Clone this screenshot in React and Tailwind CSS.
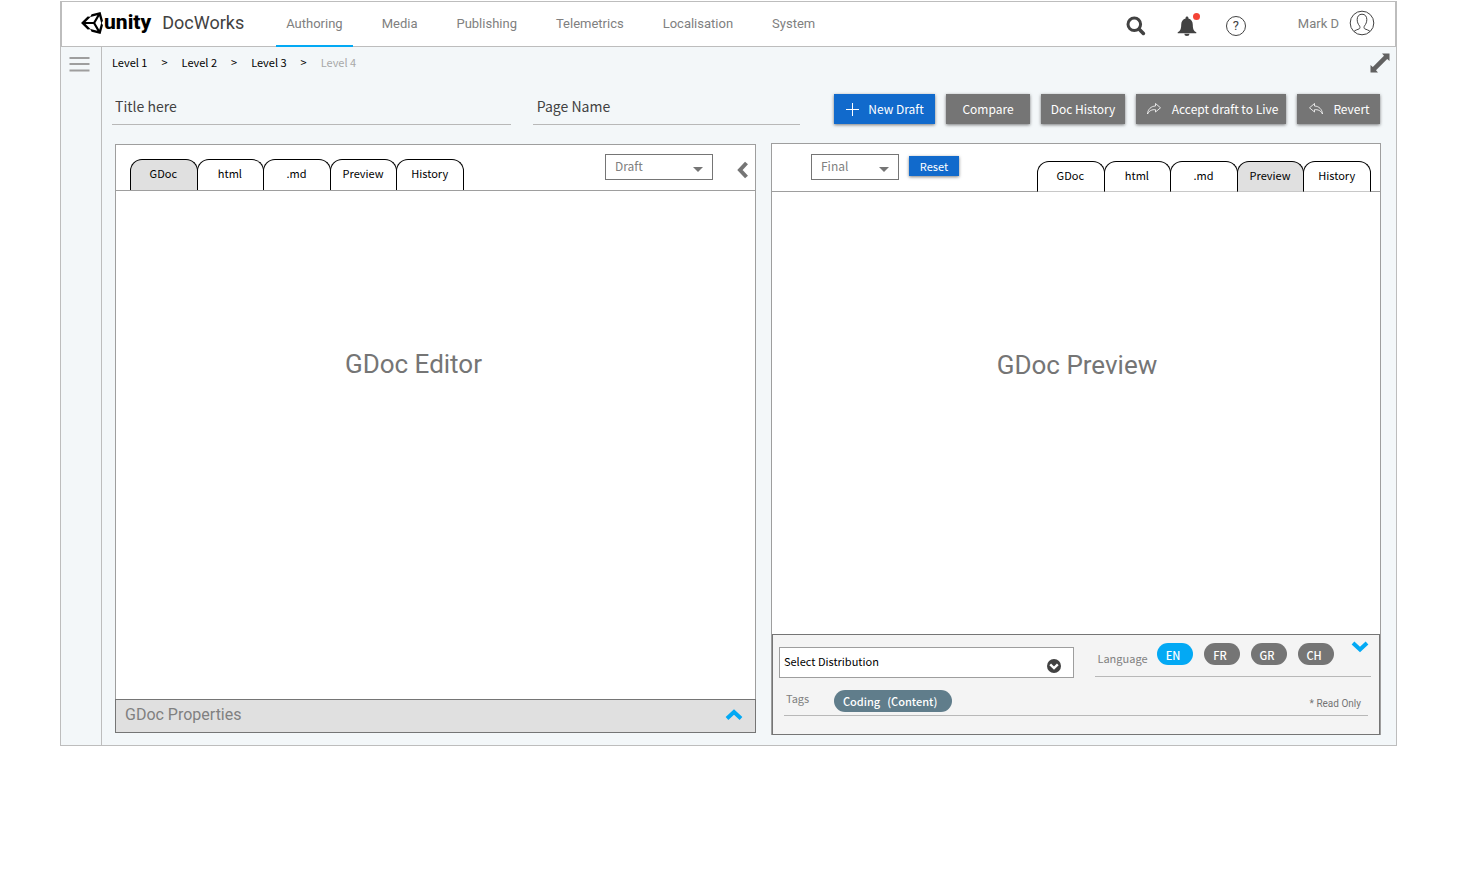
import React from "react";

const NAV = ["Authoring", "Media", "Publishing", "Telemetrics", "Localisation", "System"];
const TABS = ["GDoc", "html", ".md", "Preview", "History"];
const LANGUAGES = ["EN", "FR", "GR", "CH"];

function UnityLogo() {
  return (
    <svg width="22" height="22" viewBox="15 14 484 484" fill="currentColor">
      <path d="M498.11 206.4L445.31 14.72 248.2 66.08 219 116.14l-59.2-.43L15.54 256l144.28 140.32 59.17-.43 29.24 50 197.08 51.36 52.8-191.62-30-49.63zM223.77 124.2L374.55 86.51 288 232.33H114.87zm0 263.63L114.87 279.71H288l86.55 145.81zm193 14L330.17 256l86.58-145.84L458.56 256z" />
    </svg>
  );
}

function SearchIcon() {
  return (
    <svg width="20" height="20" viewBox="0 0 20 20" fill="none" stroke="#424242" strokeLinecap="round">
      <circle cx="8.3" cy="8.3" r="6.3" strokeWidth="3" />
      <path d="M13.2 13.2 17.4 17.4" strokeWidth="3.6" />
    </svg>
  );
}

function BellIcon() {
  return (
    <svg width="20" height="20" viewBox="0 0 20 20" fill="#424242">
      <path d="M10 0.4c.8 0 1.4.6 1.4 1.4v.7c2.8.7 4.4 3.2 4.4 6.2 0 4.300 1 6.300 3.500 7.600v1H.7v-1c2.500-1.300 3.500-3.300 3.500-7.600 0-3 1.600-5.500 4.400-6.200v-.7C8.600 1 9.200.4 10 .4Z" />
      <path d="M7.300 17.800h5.200a2.600 2.200 0 0 1-5.200 0Z" />
    </svg>
  );
}

function UserIcon() {
  return (
    <svg width="26" height="26" viewBox="0 0 26 26" fill="none" stroke="#424242" strokeWidth="1">
      <circle cx="13" cy="13" r="11.800" />
      <path d="M5 21.500c1-1.300 3.800-2 5.300-2.700.9-.5.8-2 .2-2.900-1.500-1.800-2.300-4-2.300-6.400 0-3.200 1.800-5.300 4.800-5.300s4.800 2.100 4.800 5.300c0 2.400-.8 4.600-2.300 6.400-.6.900-.7 2.400.2 2.900 1.500.7 4.300 1.400 5.300 2.700" />
    </svg>
  );
}

function ExpandIcon() {
  return (
    <svg width="20" height="20" viewBox="0 0 20 20" fill="#616161">
      <path d="M12 0.500h7.500V8l-2.300-2L6 17.200 8 19.500H.5V12l2.300 2L14 2.800Z" />
    </svg>
  );
}

function ShareIcon({ flip }) {
  return (
    <svg
      width="16"
      height="14"
      viewBox="0 0 16 14"
      fill="none"
      stroke="currentColor"
      strokeWidth="0.8"
      strokeLinejoin="round"
      className={flip ? "-scale-x-100" : ""}
    >
      <path d="M9.500 1.500 14.500 5.800 9.500 10V7.700C6 7.400 3.300 8.500 1.500 12 1.800 7.300 5 4.200 9.500 4Z" />
    </svg>
  );
}

function Chevron({ className, d, width, height }) {
  return (
    <svg
      width={width}
      height={height}
      viewBox={`0 0 ${width} ${height}`}
      fill="none"
      stroke="currentColor"
      strokeWidth="4"
      className={className}
    >
      <path d={d} />
    </svg>
  );
}

function Tabs({ active, className, tabClass }) {
  return (
    <div role="tablist" className={`flex w-[334px] pl-px ${className}`}>
      {TABS.map((t) => (
        <button
          key={t}
          role="tab"
          aria-selected={t === active}
          className={`-ml-px flex-1 rounded-t-xl border-x border-t border-black pb-1 pr-px text-[11px] leading-4 text-black ${tabClass} ${
            t === active ? "bg-[#e0e0e0]" : "bg-white"
          }`}
        >
          {t}
        </button>
      ))}
    </div>
  );
}

function StateSelect({ label, value, className }) {
  return (
    <div className={`grid items-center ${className}`}>
      <select
        aria-label={label}
        className="col-start-1 row-start-1 h-[26px] w-full appearance-none border border-[#757575] bg-white pb-[2px] pl-[9px] text-[12px] leading-4 text-[#808080]"
      >
        <option>{value}</option>
      </select>
      <svg width="10" height="5" viewBox="0 0 10 5" fill="#757575" className="pointer-events-none col-start-1 row-start-1 mr-[10px] mt-1 justify-self-end">
        <path d="M0 0h10L5 5Z" />
      </svg>
    </div>
  );
}

function ActionButton({ className, children }) {
  return (
    <button className={`flex h-[30px] items-center justify-center text-[12px] leading-4 text-white shadow-[0_1px_3px_rgba(0,0,0,0.5)] ${className}`}>
      {children}
    </button>
  );
}

function Field({ id, label, className }) {
  return (
    <input
      id={id}
      aria-label={label}
      defaultValue={label}
      className={`h-[31px] min-w-0 border-b border-[#b8b8b8] bg-transparent pb-[6px] text-[14px] leading-5 text-[#424242] outline-none ${className}`}
    />
  );
}

function Header() {
  return (
    <header className="flex h-[46px] items-center border border-[#bdbdbd] bg-white font-[Roboto,sans-serif]">
      <a href="#" className="ml-[19px] flex items-center gap-px pb-[2px] text-black">
        <UnityLogo />
        <span className="pb-[3px] text-[21px] font-extrabold leading-6">unity</span>
      </a>
      <span className="ml-[11px] pb-[2px] text-[18px] leading-6 text-[#424242]">DocWorks</span>
      <nav className="ml-[32px] flex gap-[19px] self-stretch">
        {NAV.map((n, i) => (
          <a
            key={n}
            href="#"
            className={`-mb-px px-[10px] pt-[12px] text-[13px] leading-5 text-[#808080] ${
              i === 0 ? "border-b-2 border-[#03a9f4]" : ""
            }`}
          >
            {n}
          </a>
        ))}
      </nav>
      <div className="ml-auto mr-5 flex items-center">
        <button aria-label="Search" className="mt-1">
          <SearchIcon />
        </button>
        <button aria-label="Notifications" className="relative ml-[31px] mt-1">
          <BellIcon />
          <span className="absolute -right-[3px] -top-[3px] size-[7px] rounded-full bg-[#f44336]" />
        </button>
        <button
          aria-label="Help"
          className="ml-[29px] mt-1 size-5 rounded-full border border-[#424242] text-center text-[13px] leading-[18px] text-[#424242]"
        >
          ?
        </button>
        <span className="ml-[52px] mr-[10px] text-[13px] leading-5 text-[#808080]">Mark D</span>
        <button aria-label="Account" className="pb-[2px]">
          <UserIcon />
        </button>
      </div>
    </header>
  );
}

function EditorPanel() {
  return (
    <section className="mt-px mb-[2px] flex min-w-0 flex-[641] flex-col border border-[#9e9e9e] bg-white">
      <div className="flex h-[46px] items-end border-b border-[#9e9e9e] pl-[14px]">
        <Tabs active="GDoc" className="h-[31px]" tabClass="" />
        <StateSelect label="Draft version" value="Draft" className="mb-[10px] ml-auto w-[108px]" />
        <button aria-label="Collapse editor" className="mb-[11px] ml-[24px] mr-[7px] text-[#757575]">
          <Chevron width={11} height={18} d="M9.500 2 3 9l6.500 7" />
        </button>
      </div>
      <div className="min-h-[508px] flex-1 pr-[44px] pt-[157px] text-center font-[Roboto,sans-serif] text-[26px] leading-8 text-[#757575]">
        GDoc Editor
      </div>
      <button className="-mx-px -mb-px flex h-[34px] items-center justify-between border border-[#757575] bg-[#e0e0e0] pb-[3px] pl-[9px] pr-3 font-[Roboto,sans-serif] text-[16px] leading-5 text-[#808080]">
        <span>GDoc Properties</span>
        <Chevron width={18} height={12} className="text-[#03a9f4]" d="M2 9.500 9 3 16 9.500" />
      </button>
    </section>
  );
}

function PreviewPanel() {
  return (
    <section className="flex min-w-0 flex-[610] flex-col border border-[#9e9e9e] bg-white">
      <div className="flex h-[48px] items-end border-b border-[#9e9e9e] pl-[39px]">
        <StateSelect label="Final version" value="Final" className="mb-[11px] w-[88px]" />
        <button className="mb-[15px] ml-[10px] h-5 w-[50px] bg-[#116acc] text-[11px] leading-4 text-white shadow-[0_1px_3px_rgba(0,0,0,0.5)]">
          Reset
        </button>
        <Tabs active="Preview" className="-mb-px ml-auto mr-[9px] h-[31px]" tabClass="border-b border-b-[#c8c8c8]" />
      </div>
      <div className="min-h-[442px] flex-1 pl-[2px] pt-[157px] text-center font-[Roboto,sans-serif] text-[26px] leading-8 text-[#757575]">
        GDoc Preview
      </div>
      <div className="-mb-px h-[101px] border border-[#757575] bg-[#f4f4f4] pl-[6px] pr-2">
        <div className="flex h-[43px] items-start gap-[21px]">
          <div className="mt-3 grid flex-[296] items-center">
            <select
              aria-label="Distribution"
              className="col-start-1 row-start-1 h-[31px] w-full appearance-none border border-[#9e9e9e] bg-white pb-[3px] pl-1 text-[11px] leading-4 text-black"
            >
              <option>Select Distribution</option>
            </select>
            <svg width="14" height="14" viewBox="0 0 14 14" className="pointer-events-none col-start-1 row-start-1 mr-[13px] mt-[7px] justify-self-end">
              <circle cx="7" cy="7" r="7" fill="#424242" />
              <path d="M3.200 5.300 7 9l3.800-3.700" fill="none" stroke="#fff" strokeWidth="2.400" />
            </svg>
          </div>
          <div className="flex h-[42px] flex-[274] items-start border-b border-[#b8b8b8] pl-[2px]">
            <span className="mt-[15px] text-[11px] leading-4 text-[#808080]">Language</span>
            <div className="ml-[9px] mt-2 flex gap-[11px]">
              {LANGUAGES.map((l) => (
                <button
                  key={l}
                  className={`h-[22px] w-9 rounded-full pr-[3px] pt-px text-[11px] font-medium leading-4 text-white ${
                    l === "EN" ? "bg-[#03a9f4]" : "bg-[#757575]"
                  }`}
                >
                  {l}
                </button>
              ))}
            </div>
            <button aria-label="Collapse properties" className="ml-auto mr-[2px] mt-[6px] text-[#03a9f4]">
              <Chevron width={18} height={12} d="M2 2 9 8.500 16 2" />
            </button>
          </div>
        </div>
        <div className="ml-[5px] mr-[3px] flex h-[38px] items-center border-b border-[#b8b8b8] pl-[2px] pr-[7px] pt-2">
          <span className="pb-[5px] text-[11px] leading-4 text-[#808080]">Tags</span>
          <button className="ml-[25px] flex h-[22px] w-[118px] items-center justify-center gap-[7px] rounded-full bg-[#607d8b] pr-[6px] text-[11px] font-medium leading-4 text-white">
            <span>Coding</span>
            <span>(Content)</span>
          </button>
          <span className="ml-auto pt-[7px] font-[Roboto,sans-serif] text-[10px] leading-4 text-[#757575]">* Read Only</span>
        </div>
      </div>
    </section>
  );
}

export default function App() {
  return (
    <div className="pl-[60px] pr-[67px] pt-px font-['Noto_Sans_CJK_SC',sans-serif]">
      <div className="border-x border-b border-[#bdbdbd] bg-[#f3f7f9]">
        <Header />
        <div className="flex">
          <aside className="-mb-[3px] w-[41px] shrink-0 border-r border-[#bdbdbd] pl-2 pt-[9px]">
            <button aria-label="Menu" className="block">
              <svg width="21" height="16" viewBox="0 0 21 16" stroke="#9e9e9e" strokeWidth="2">
                <path d="M0.500 2h20M0.500 8h20M0.500 14.500h20" />
              </svg>
            </button>
          </aside>
          <main className="min-w-0 flex-1 pb-[10px] pl-[10px] pr-[15px]">
            <div className="-mr-[9px] flex h-[47px] items-start justify-between">
              <ol className="flex gap-[14px] pt-[7px] text-[11px] leading-4 text-black">
                {["Level 1", "Level 2", "Level 3"].map((l) => (
                  <React.Fragment key={l}>
                    <li>
                      <a href="#">{l}</a>
                    </li>
                    <li aria-hidden="true">&gt;</li>
                  </React.Fragment>
                ))}
                <li className="text-[#a8a8a8]">Level 4</li>
              </ol>
              <button aria-label="Full screen" className="mt-[6px]">
                <ExpandIcon />
              </button>
            </div>
            <div className="flex items-start pr-px">
              <Field id="title" label="Title here" className="w-0 flex-[400] pl-[3px]" />
              <Field id="page-name" label="Page Name" className="ml-[22px] w-0 flex-[266] pl-1" />
              <div className="ml-[34px] flex shrink-0 gap-[11px]">
                <ActionButton className="w-[101px] gap-[9px] bg-[#116acc] pl-px">
                  <svg width="13" height="13" viewBox="0 0 13 13" stroke="currentColor" strokeWidth="1">
                    <path d="M6.500 0v13M0 6.500h13" />
                  </svg>
                  New Draft
                </ActionButton>
                <ActionButton className="w-[84px] bg-[#757575]">Compare</ActionButton>
                <ActionButton className="w-[84px] bg-[#757575]">Doc History</ActionButton>
                <ActionButton className="w-[150px] gap-[10px] bg-[#757575] pl-[2px]">
                  <ShareIcon />
                  Accept draft to Live
                </ActionButton>
                <ActionButton className="w-[83px] gap-[9px] bg-[#757575] pl-px">
                  <ShareIcon flip />
                  Revert
                </ActionButton>
              </div>
            </div>
            <div className="ml-[3px] mt-[18px] flex gap-[15px]">
              <EditorPanel />
              <PreviewPanel />
            </div>
          </main>
        </div>
      </div>
    </div>
  );
}
